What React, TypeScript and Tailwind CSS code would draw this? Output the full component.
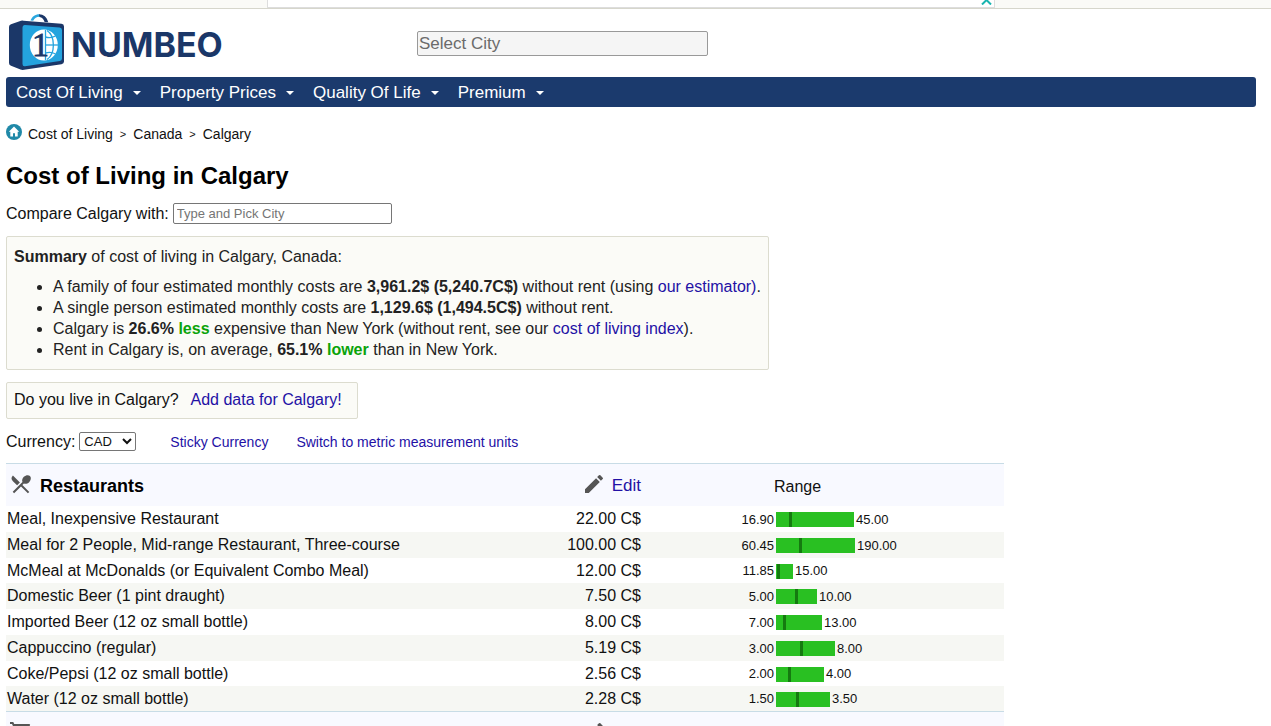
import React, { useState } from 'react';
import { MdEdit, MdLocalDining, MdShoppingCart } from 'react-icons/md';

interface PriceItem {
  name: string;
  price: string;
  low: string;
  high: string;
  bar: number;
  marker: number;
}

const menuItems = ['Cost Of Living', 'Property Prices', 'Quality Of Life', 'Premium'];

// bar and marker are pixel lengths of the range graph
const restaurants: PriceItem[] = [
  { name: 'Meal, Inexpensive Restaurant', price: '22.00 C$', low: '16.90', high: '45.00', bar: 78, marker: 13 },
  { name: 'Meal for 2 People, Mid-range Restaurant, Three-course', price: '100.00 C$', low: '60.45', high: '190.00', bar: 79, marker: 23 },
  { name: 'McMeal at McDonalds (or Equivalent Combo Meal)', price: '12.00 C$', low: '11.85', high: '15.00', bar: 17, marker: 1 },
  { name: 'Domestic Beer (1 pint draught)', price: '7.50 C$', low: '5.00', high: '10.00', bar: 41, marker: 19 },
  { name: 'Imported Beer (12 oz small bottle)', price: '8.00 C$', low: '7.00', high: '13.00', bar: 46, marker: 7 },
  { name: 'Cappuccino (regular)', price: '5.19 C$', low: '3.00', high: '8.00', bar: 59, marker: 24 },
  { name: 'Coke/Pepsi (12 oz small bottle)', price: '2.56 C$', low: '2.00', high: '4.00', bar: 48, marker: 12 },
  { name: 'Water (12 oz small bottle)', price: '2.28 C$', low: '1.50', high: '3.50', bar: 54, marker: 20 },
];

const Logo = () => (
  <a href="#" aria-label="Numbeo" className="flex items-start gap-[6px]">
    <svg width="57" height="58" viewBox="8 13 57 58" className="shrink-0">
      <path d="M30.5 20.5C32 16.5 35 14.2 39.5 14.2L41 16.8C37 16.4 34.8 17.6 33.2 20.8Z" fill="#2aa7df" />
      <path d="M39 14.2C43.5 14.2 47 17 48.2 22.2L44.6 22C43.6 19.2 42 17.4 39.5 17Z" fill="#1b3768" />
      <path d="M9 27Q9 25 11 24.3L21 20.8Q22 20.5 23.5 20.7L61.5 23.8Q64 24 64 26.5V61.5Q64 63.8 61.5 64.2L24 69.8Q22 70.1 20.5 69.5L11 65.8Q9 65 9 63Z" fill="#1b3768" />
      <path d="M22.5 27.5Q22.5 24.7 25 25L59.5 27.4Q62 27.6 62 30V58.5Q62 60.6 59.8 61L25 66.3Q22.5 66.6 22.5 64Z" fill="#24a3de" />
      <ellipse cx="43.8" cy="45" rx="14" ry="15.5" fill="#fff" />
      <g fill="none" stroke="#24a3de" strokeWidth="1.3">
        <path d="M45.5 30V60" />
        <path d="M47 30.5C55.5 36 55.5 54 47 59.5" />
        <path d="M45.5 37Q51 38.5 55.5 36" />
        <path d="M45.5 45H58" />
        <path d="M45.5 53Q51 51.5 55.5 54" />
      </g>
      <text x="32" y="56" fontSize="34" fontFamily="'Liberation Serif', serif" fill="#1b3768" stroke="#1b3768" strokeWidth="0.8">1</text>
    </svg>
    <span className="pt-[12px] font-['Inter',sans-serif] text-[34px] leading-10 font-bold text-[#1b3768]">NUMBEO</span>
  </a>
);

const HomeIcon = () => (
  <svg width="16" height="16" viewBox="0 0 16 16" className="mb-[5px] shrink-0">
    <circle cx="8" cy="8" r="8" fill="#2089a8" />
    <path d="M8 2.6L2.8 7.8H4.3V12.6H7V9.2H9V12.6H11.7V7.8H13.2Z" fill="#fff" />
  </svg>
);

const Caret = () => (
  <svg width="8" height="4" viewBox="0 0 8 4" className="mt-[2px]">
    <path d="M0 0H8L4 4Z" fill="currentColor" />
  </svg>
);

const Link = ({ children }: { children: React.ReactNode }) => (
  <a href="#" className="text-[#2311a5]">{children}</a>
);

const SectionHeader = ({ title, icon }: { title: string; icon: React.ReactNode }) => (
  <tr className="h-[42px] border-t border-[#c8dce6] bg-[#f8f9ff]">
    <th className="p-0 text-left">
      <span className="flex items-start gap-[7px] pl-[3px] text-lg leading-6 font-bold text-black">
        <span className="text-[#555]">{icon}</span>
        <span className="pt-[2px]">{title}</span>
      </span>
    </th>
    <th className="p-0 font-normal">
      <span className="flex items-start justify-end gap-[6px] pr-[2px] text-[17px] leading-6">
        <MdEdit size={24} className="text-[#555]" />
        <span className="pt-[2px]"><Link>Edit</Link></span>
      </span>
    </th>
    <th className="p-0 pt-[3px] pl-[131px] text-left font-normal">Range</th>
  </tr>
);

const PriceRow = ({ item }: { item: PriceItem }) => (
  <tr className="h-[26px] nth-[4n+3]:h-[25px] even:bg-[#f6f7f3]">
    <td className="p-0 pl-px">{item.name}</td>
    <td className="p-0 pr-[2px] text-right whitespace-nowrap">{item.price}</td>
    <td className="p-0">
      <div className="flex items-center gap-[2px] pt-[2px] text-[13px] leading-5">
        <span className="w-[131px] text-right">{item.low}</span>
        <div className="flex h-[15px] bg-[#29c022]" style={{ width: item.bar }}>
          <div className="w-[3px] bg-[#157a10]" style={{ marginLeft: item.marker }} />
        </div>
        <span>{item.high}</span>
      </div>
    </td>
  </tr>
);

const App = () => {
  const [city, setCity] = useState('');
  const [compareCity, setCompareCity] = useState('');
  const [currency, setCurrency] = useState('CAD');

  return (
    <div className="h-screen overflow-hidden bg-white font-['Liberation_Sans',Arial,sans-serif] text-base leading-[21px] text-[#111]">
      <div className="flex h-[9px] justify-center border-b border-[#d6d6cc] bg-[#fafaf7] pr-[9px]">
        <div className="flex w-full max-w-[728px] justify-end border-x border-b border-[#ddd] bg-white pr-[2px]">
          <svg width="11" height="5" viewBox="0 0 11 5">
            <path d="M1 4.5L5.5 0L10 4.5" fill="none" stroke="#1ab5b0" strokeWidth="2" />
          </svg>
        </div>
      </div>

      <header className="pr-[15px] pl-[6px]">
        <div className="flex h-[68px] items-start pt-[4px] pl-[2px]">
          <div className="w-[409px]">
            <Logo />
          </div>
          <input
            type="text"
            aria-label="Select City"
            placeholder="Select City"
            value={city}
            onChange={(e) => setCity(e.target.value)}
            className="mt-[18px] h-[25px] w-[291px] rounded-[2px] border border-[#999] bg-[#f5f5f5] px-px text-[17px] placeholder:text-[#6b6b6b]"
          />
        </div>
        <nav className="flex h-[30px] items-center gap-[19px] rounded-[3px] bg-[#1b3a6d] px-[10px] text-[17px] text-white">
          {menuItems.map((label) => (
            <button key={label} type="button" className="flex items-center gap-[10px]">
              {label}
              <Caret />
            </button>
          ))}
        </nav>
      </header>

      <main className="px-[6px]">
        <div className="flex items-center gap-[6px] pt-[17px] text-sm leading-[21px]">
          <a href="#" aria-label="Home"><HomeIcon /></a>
          <a href="#">Cost of Living</a>
          <span className="px-px text-[11px]">&gt;</span>
          <a href="#">Canada</a>
          <span className="px-px text-[11px]">&gt;</span>
          <a href="#">Calgary</a>
        </div>

        <h1 className="pt-[17px] text-2xl leading-[28px] font-bold text-black">Cost of Living in Calgary</h1>

        <div className="flex items-center gap-[4px] pt-[13px]">
          <label htmlFor="compare">Compare Calgary with:</label>
          <input
            id="compare"
            type="text"
            placeholder="Type and Pick City"
            value={compareCity}
            onChange={(e) => setCompareCity(e.target.value)}
            className="h-[21px] w-[219px] rounded-[2px] border border-[#767676] px-[3px] text-[13px] placeholder:text-[#757575]"
          />
        </div>

        <section className="mt-[12px] w-fit rounded-[2px] border border-[#dcdccf] bg-[#fbfbf7] px-[7px] py-[9px] text-[#222]">
          <p><b>Summary</b> of cost of living in Calgary, Canada:</p>
          <ul className="list-disc pt-[9px] pl-[39px]">
            <li>
              A family of four estimated monthly costs are <b>3,961.2$ (5,240.7C$)</b> without rent (using <Link>our estimator)</Link>.
            </li>
            <li>
              A single person estimated monthly costs are <b>1,129.6$ (1,494.5C$)</b> without rent.
            </li>
            <li>
              Calgary is <b>26.6% <span className="text-[#0aa30a]">less</span></b> expensive than New York (without rent, see our <Link>cost of living index</Link>).
            </li>
            <li>
              Rent in Calgary is, on average, <b>65.1% <span className="text-[#0aa30a]">lower</span></b> than in New York.
            </li>
          </ul>
        </section>

        <div className="mt-[12px] flex w-fit gap-[12px] rounded-[2px] border border-[#dcdccf] bg-[#fbfbf7] pt-[6px] pr-[15px] pb-[8px] pl-[7px]">
          <span>Do you live in Calgary?</span>
          <Link>Add data for Calgary!</Link>
        </div>

        <div className="flex items-center pt-[12px] pb-[11px]">
          <label htmlFor="currency">Currency:</label>
          <select
            id="currency"
            value={currency}
            onChange={(e) => setCurrency(e.target.value)}
            className="ml-[4px] h-[19px] w-[57px] rounded-[2px] border border-[#767676] bg-white text-[13px] leading-4"
          >
            <option>CAD</option>
            <option>USD</option>
            <option>EUR</option>
          </select>
          <span className="flex gap-[28px] pl-[34px] text-sm">
            <Link>Sticky Currency</Link>
            <Link>Switch to metric measurement units</Link>
          </span>
        </div>

        <table className="w-full max-w-[998px] table-fixed border-collapse">
          <colgroup>
            <col />
            <col className="w-[120px]" />
            <col className="w-[361px]" />
          </colgroup>
          <tbody>
            <SectionHeader title="Restaurants" icon={<MdLocalDining size={24} />} />
          </tbody>
          <tbody>
            {restaurants.map((item) => (
              <PriceRow key={item.name} item={item} />
            ))}
          </tbody>
          <tbody>
            <SectionHeader title="Markets" icon={<MdShoppingCart size={24} />} />
          </tbody>
        </table>
      </main>
    </div>
  );
};

export default App;
